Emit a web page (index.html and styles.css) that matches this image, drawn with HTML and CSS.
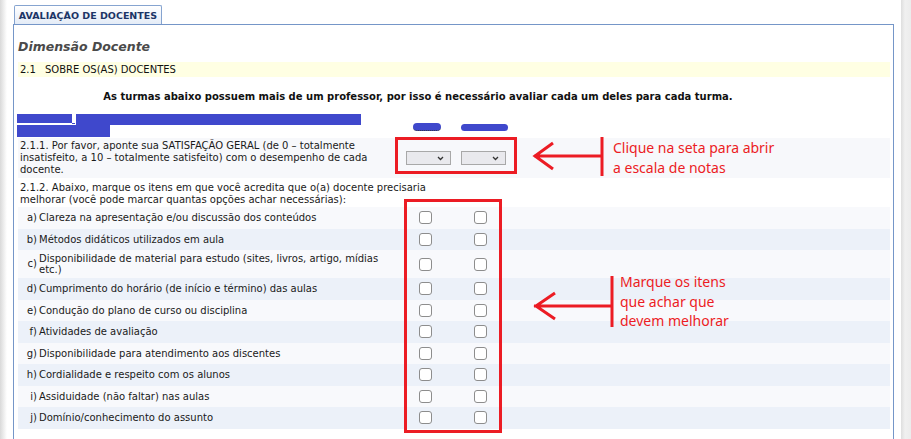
FILE: index.html
```html
<!DOCTYPE html>
<html lang="pt-BR">
<head>
    <meta charset="UTF-8">
    <meta name="viewport" content="width=device-width, initial-scale=1.0">
    <title>Avaliação de Docentes</title>
    <link rel="stylesheet" href="styles.css">
</head>
<body>
    <div class="shell">
        <div class="edge"></div>

        <main class="page">
            <div class="tabs">
                <div class="tab">AVALIAÇÃO DE DOCENTES</div>
            </div>

            <section class="panel">
                <h2 class="dimension">Dimensão Docente</h2>
                <div class="section-bar"><span class="num">2.1</span>SOBRE OS(AS) DOCENTES</div>
                <p class="notice">As turmas abaixo possuem mais de um professor, por isso é necessário avaliar cada um deles para cada turma.</p>

                <!-- cabeçalho com os nomes (ocultados) -->
                <div class="row head">
                    <div class="names">
                        <div class="name-line"><span class="redact r1"></span><span class="dash"></span><span class="redact r2"></span></div>
                        <div class="name-line"><span class="redact r3"></span></div>
                    </div>
                    <div class="cell"><span class="blob b1"></span></div>
                    <div class="cell"><span class="blob b2"></span></div>
                </div>

                <div class="row q q1">
                    <div class="qtext">2.1.1. Por favor, aponte sua SATISFAÇÃO GERAL (de 0 – totalmente insatisfeito, a 10 – totalmente satisfeito) com o desempenho de cada docente.</div>
                    <div class="cell"><span class="select"><svg width="7" height="5" viewBox="0 0 7 5"><path d="M1 1 L3.5 3.5 L6 1" fill="none" stroke="#333" stroke-width="1.3"/></svg></span></div>
                    <div class="cell"><span class="select"><svg width="7" height="5" viewBox="0 0 7 5"><path d="M1 1 L3.5 3.5 L6 1" fill="none" stroke="#333" stroke-width="1.3"/></svg></span></div>
                </div>

                <div class="row q q2">
                    <div class="qtext">2.1.2. Abaixo, marque os itens em que você acredita que o(a) docente precisaria melhorar (você pode marcar quantas opções achar necessárias):</div>
                </div>

                <div class="row item">
                    <div class="label"><span class="letter">a)</span><span>Clareza na apresentação e/ou discussão dos conteúdos</span></div>
                    <div class="cell"><input type="checkbox" class="check"></div>
                    <div class="cell"><input type="checkbox" class="check"></div>
                </div>
                <div class="row item alt">
                    <div class="label"><span class="letter">b)</span><span>Métodos didáticos utilizados em aula</span></div>
                    <div class="cell"><input type="checkbox" class="check"></div>
                    <div class="cell"><input type="checkbox" class="check"></div>
                </div>
                <div class="row item tall">
                    <div class="label"><span class="letter">c)</span><span>Disponibilidade de material para estudo (sites, livros, artigo, mídias etc.)</span></div>
                    <div class="cell"><input type="checkbox" class="check"></div>
                    <div class="cell"><input type="checkbox" class="check"></div>
                </div>
                <div class="row item alt">
                    <div class="label"><span class="letter">d)</span><span>Cumprimento do horário (de início e término) das aulas</span></div>
                    <div class="cell"><input type="checkbox" class="check"></div>
                    <div class="cell"><input type="checkbox" class="check"></div>
                </div>
                <div class="row item">
                    <div class="label"><span class="letter">e)</span><span>Condução do plano de curso ou disciplina</span></div>
                    <div class="cell"><input type="checkbox" class="check"></div>
                    <div class="cell"><input type="checkbox" class="check"></div>
                </div>
                <div class="row item alt">
                    <div class="label"><span class="letter">f)</span><span>Atividades de avaliação</span></div>
                    <div class="cell"><input type="checkbox" class="check"></div>
                    <div class="cell"><input type="checkbox" class="check"></div>
                </div>
                <div class="row item">
                    <div class="label"><span class="letter">g)</span><span>Disponibilidade para atendimento aos discentes</span></div>
                    <div class="cell"><input type="checkbox" class="check"></div>
                    <div class="cell"><input type="checkbox" class="check"></div>
                </div>
                <div class="row item alt">
                    <div class="label"><span class="letter">h)</span><span>Cordialidade e respeito com os alunos</span></div>
                    <div class="cell"><input type="checkbox" class="check"></div>
                    <div class="cell"><input type="checkbox" class="check"></div>
                </div>
                <div class="row item">
                    <div class="label"><span class="letter">i)</span><span>Assiduidade (não faltar) nas aulas</span></div>
                    <div class="cell"><input type="checkbox" class="check"></div>
                    <div class="cell"><input type="checkbox" class="check"></div>
                </div>
                <div class="row item alt">
                    <div class="label"><span class="letter">j)</span><span>Domínio/conhecimento do assunto</span></div>
                    <div class="cell"><input type="checkbox" class="check"></div>
                    <div class="cell"><input type="checkbox" class="check"></div>
                </div>
            </section>
        </main>

        <div class="scrollbar"></div>
    </div>

    <!-- marcações em vermelho por cima da tela -->
    <svg class="marks" width="911" height="439" viewBox="0 0 911 439">
        <g fill="none" stroke="#ec1c24" stroke-width="3">
            <rect x="396.5" y="138.5" width="119" height="34"/>
            <rect x="405.5" y="200.5" width="95" height="231"/>
            <path d="M534 156 H602 M553 143 L535 156 L553 169"/>
            <path d="M602 137 V176"/>
            <path d="M534 306 H612 M555 293 L536 306 L555 319"/>
            <path d="M612 276 V327"/>
        </g>
    </svg>
    <div class="note note-1">Clique na seta para abrir<br>a escala de notas</div>
    <div class="note note-2">Marque os itens<br>que achar que<br>devem melhorar</div>
</body>
</html>
```

FILE: styles.css
```css
body {
    margin: 0;
    background: #fff;
    font-family: "DejaVu Sans", Verdana, sans-serif;
    font-size: 10px;
    color: #1a1a1a;
    position: relative;
    height: 439px;
    overflow: hidden;
}

.shell {
    display: flex;
    height: 439px;
}

.edge {
    width: 7px;
    background: linear-gradient(to right, #d9d9d9, #f4f4f4 70%, #fff);
}

.page {
    flex: 1;
    padding: 5px 7px 0 6px;
}

.scrollbar {
    width: 10px;
    background: linear-gradient(to right, #dedede, #f0f0f0 40%, #ececec);
}

/* aba */
.tabs {
    display: flex;
    padding-left: 1px;
}

.tab {
    width: 146px;
    height: 18px;
    border: 1px solid #86a4d0;
    border-bottom: none;
    border-radius: 2px 2px 0 0;
    background: linear-gradient(#ffffff, #e4ecf7);
    color: #1c3566;
    font-weight: bold;
    font-size: 9.5px;
    line-height: 19px;
    text-align: center;
}

.panel {
    border: 1px solid #7596c8;
    border-bottom: none;
    padding: 14px 3px 0 4px;
    height: 420px;
}

.dimension {
    margin: 0 0 7px;
    font-size: 12.5px;
    font-style: italic;
    font-weight: bold;
    color: #4a4a4a;
    line-height: 16px;
}

.section-bar {
    background: #ffffe3;
    height: 15px;
    line-height: 15px;
    padding-left: 2px;
    color: #111;
}

.section-bar .num {
    margin-right: 9px;
}

.notice {
    margin: 12px 0 8px;
    padding-right: 72px;
    text-align: center;
    font-weight: bold;
    font-size: 10px;
    line-height: 16px;
    color: #111;
}

/* linhas em grade */
.row {
    display: grid;
    grid-template-columns: 380px 54px 56px 1fr;
    align-items: center;
}

.cell {
    display: flex;
    justify-content: center;
    align-items: center;
}

.head {
    height: 25px;
    align-items: end;
}

.names {
    align-self: start;
    padding-top: 1px;
    margin-left: -1px;
}

.name-line {
    display: flex;
    align-items: flex-start;
}

.redact {
    display: block;
    background: #3f48cc;
}

.r1 { width: 55px; height: 9px; }
.r2 { width: 285px; height: 11px; }
.r3 { width: 93px; height: 12px; }

.dash {
    width: 3px;
    height: 1px;
    margin: 9px 1px 0 0;
    background: #3f48cc;
}

.head .cell {
    padding-bottom: 7px;
}

.blob {
    display: block;
    height: 7px;
    border-radius: 4px;
    background: #3f48cc;
}

.b1 {
    width: 28px;
    margin-left: 4px;
    border-bottom: 1px dotted #333;
}

.b2 {
    width: 57px;
    margin-left: 9px;
}

.q .qtext {
    padding-left: 2px;
    line-height: 12px;
}

.q1 .qtext {
    width: 370px;
}

.q2 .qtext {
    grid-column: 1 / -1;
    width: 420px;
}

.q1 {
    background: #f7f8fb;
    padding: 2px 0;
}

.q2 {
    padding: 4px 0 1px;
}

.select {
    display: flex;
    justify-content: flex-end;
    align-items: center;
    box-sizing: border-box;
    width: 45px;
    height: 14px;
    margin-left: 7px;
    padding-right: 6px;
    border: 1px solid #a8a8a8;
    background: #e9e9ed;
}

.item {
    height: 21.5px;
    background: #f8f9fc;
}

.item.alt {
    background: #ecf1f9;
}

.item.tall {
    height: 28px;
}

.label {
    display: flex;
    align-items: center;
    line-height: 11.5px;
}

.letter {
    width: 19px;
    flex-shrink: 0;
    text-align: right;
    margin-right: 2px;
}

.check {
    appearance: none;
    -webkit-appearance: none;
    margin: 0;
    width: 13px;
    height: 13px;
    border: 1px solid #8d8d8d;
    border-radius: 3px;
    background: #fff;
}

/* anotações */
.marks {
    position: absolute;
    top: 0;
    left: 0;
    pointer-events: none;
}

.note {
    position: absolute;
    color: #ec1c24;
    font-family: "Noto Sans", "Open Sans", sans-serif;
    font-size: 14px;
    line-height: 19.5px;
}

.note-1 {
    left: 613px;
    top: 138px;
}

.note-2 {
    left: 620px;
    top: 272px;
}
```
